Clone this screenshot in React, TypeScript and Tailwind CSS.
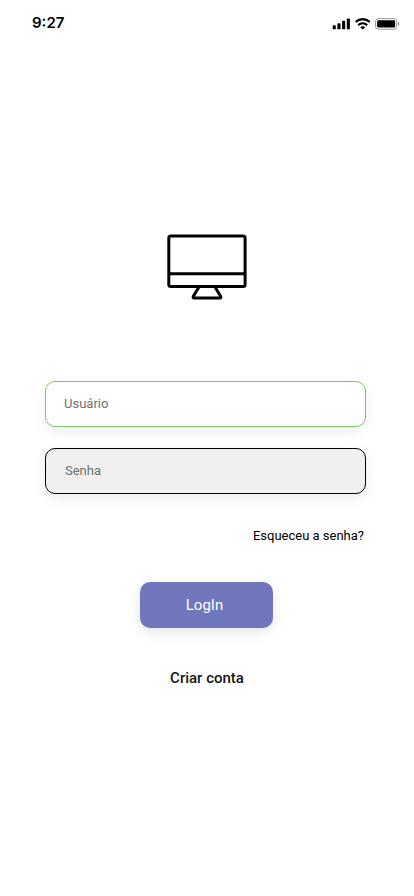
import type { ReactNode } from "react";

function StatusBar() {
  return (
    <header className="flex h-[46px] items-center justify-between pl-8 pr-[14px]">
      <span className="font-['Inter','Liberation_Sans',sans-serif] text-[15px] font-semibold leading-[18px] text-black">
        9:27
      </span>
      <svg className="h-[13px] w-[68px]" viewBox="0 0 68 13" fill="none">
        <g fill="#000">
          <rect x="0.7" y="8.2" width="3.1" height="4.1" rx="0.9" />
          <rect x="5.4" y="6.2" width="3.1" height="6.1" rx="0.9" />
          <rect x="10.1" y="3.8" width="3.1" height="8.5" rx="0.9" />
          <rect x="14.8" y="1.4" width="3.1" height="10.9" rx="0.9" />
        </g>
        <g stroke="#000" strokeWidth="2.1">
          <path d="M23.6 5C27.7 1.2 33.7 1.2 37.8 5" />
          <path d="M26.2 8.1C28.8 5.8 32.6 5.8 35.2 8.1" />
        </g>
        <path d="M28.2 10.2C29.6 9 31.8 9 33.2 10.2L30.7 12.6Z" fill="#000" />
        <rect x="43.5" y="1.6" width="21.2" height="10.6" rx="2.8" stroke="#000" strokeOpacity="0.4" />
        <rect x="45.1" y="3.2" width="18" height="7.4" rx="1.4" fill="#000" />
        <path d="M66 5V9C66.8 8.7 67.2 7.8 67.2 7C67.2 6.1 66.8 5.3 66 5Z" fill="#000" fillOpacity="0.45" />
      </svg>
    </header>
  );
}

function MonitorIcon() {
  return (
    <svg
      className="mt-[188px] h-[66px] w-20 self-center"
      viewBox="0 0 80 66"
      fill="none"
      stroke="#000"
      strokeWidth="3"
      strokeLinejoin="round"
    >
      <rect x="1.8" y="2.1" width="76.3" height="50.4" rx="2" />
      <path d="M2 39.7H78" />
      <path d="M32 53L26.3 62.2Q25.6 64 27.2 64H52.8Q54.4 64 53.6 62.2L48 53" />
    </svg>
  );
}

function Field({ className, children }: { className: string; children: ReactNode }) {
  return (
    <div
      className={`flex h-[46px] w-[321px] items-center rounded-[10px] border text-[13px] leading-4 text-[#707070] shadow-[0_4px_14px_rgba(0,0,0,0.08)] ${className}`}
    >
      {children}
    </div>
  );
}

export default function App() {
  return (
    <main className="flex h-[896px] w-[414px] flex-col bg-white font-['Roboto','Liberation_Sans',sans-serif]">
      <StatusBar />
      <MonitorIcon />
      <form className="mt-[81px] flex flex-col pl-[45px]">
        <Field className="border-[#82c272] bg-white pl-[18px]">Usuário</Field>
        <Field className="mt-[21px] border-black bg-[#f0f0f0] pl-[19px]">Senha</Field>
        <a className="mr-[50px] mt-[34px] self-end text-[13px] leading-4 text-black">Esqueceu a senha?</a>
        <button
          type="button"
          className="ml-[95px] mt-[38px] flex h-[46px] w-[133px] items-center justify-center rounded-[10px] bg-[#7077bd] pr-1 text-[15px] leading-[18px] text-white shadow-[0_4px_14px_rgba(0,0,0,0.1)]"
        >
          LogIn
        </button>
      </form>
      <a className="mt-[41px] self-center text-[15px] font-medium leading-[18px] text-[#151515]">Criar conta</a>
    </main>
  );
}
